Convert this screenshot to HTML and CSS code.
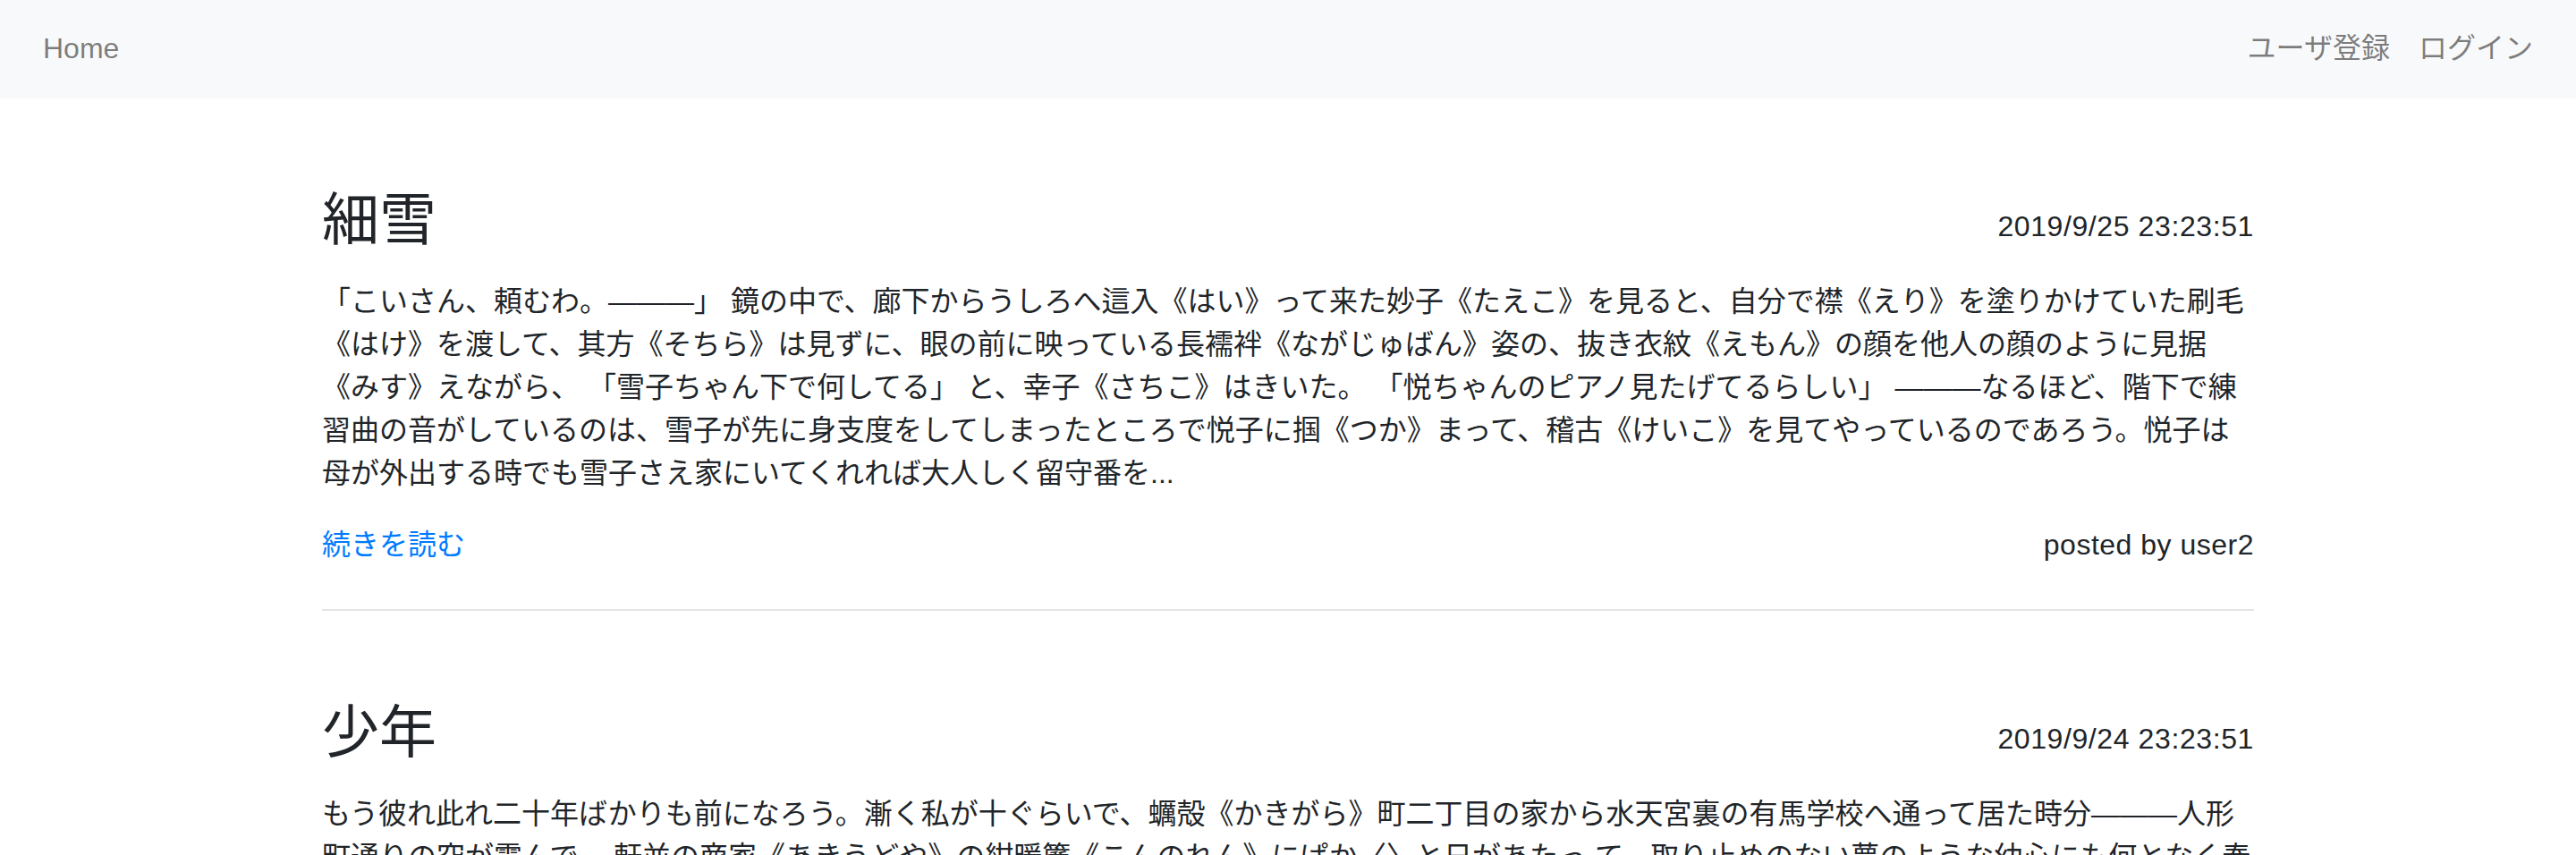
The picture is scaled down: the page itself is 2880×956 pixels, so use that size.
FILE: index.html
```html
<!DOCTYPE html>
<html lang="ja">
<head>
<meta charset="utf-8">
<title>Posts</title>
<link rel="stylesheet" href="styles.css">
</head>
<body>
<nav class="navbar">
  <ul class="nav-list">
    <li><a class="nav-link" href="#">Home</a></li>
  </ul>
  <ul class="nav-list">
    <li><a class="nav-link" href="#">ユーザ登録</a></li>
    <li><a class="nav-link" href="#">ログイン</a></li>
  </ul>
</nav>
<main class="container">
  <article class="post">
    <div class="post-head">
      <h2 class="post-title">細雪</h2>
      <span class="post-date">2019/9/25 23:23:51</span>
    </div>
    <p class="post-body">「こいさん、頼むわ。———」 鏡の中で、廊下からうしろへ這入《はい》って来た妙子《たえこ》を見ると、自分で襟《えり》を塗りかけていた刷毛《はけ》を渡して、其方《そちら》は見ずに、眼の前に映っている長襦袢《ながじゅばん》姿の、抜き衣紋《えもん》の顔を他人の顔のように見据《みす》えながら、 「雪子ちゃん下で何してる」 と、幸子《さちこ》はきいた。 「悦ちゃんのピアノ見たげてるらしい」 ———なるほど、階下で練習曲の音がしているのは、雪子が先に身支度をしてしまったところで悦子に掴《つか》まって、稽古《けいこ》を見てやっているのであろう。悦子は母が外出する時でも雪子さえ家にいてくれれば大人しく留守番を...</p>
    <div class="post-foot">
      <a class="read-more" href="#">続きを読む</a>
      <span class="post-author">posted by user2</span>
    </div>
  </article>
  <hr class="divider">
  <article class="post">
    <div class="post-head">
      <h2 class="post-title">少年</h2>
      <span class="post-date">2019/9/24 23:23:51</span>
    </div>
    <p class="post-body">もう彼れ此れ二十年ばかりも前になろう。漸く私が十ぐらいで、蠣殻《かきがら》町二丁目の家から水天宮裏の有馬学校へ通って居た時分———人形町通りの空が霞んで、 軒並の商家《あきうどや》の紺暖簾《こんのれん》にぱか〈〉と日があたっ て、取り止めのない夢のような幼心にも何となく春が感じられる陽気な時候の頃であった。...</p>
    <div class="post-foot">
      <a class="read-more" href="#">続きを読む</a>
      <span class="post-author">posted by user1</span>
    </div>
  </article>
</main>
</body>
</html>
```
FILE: styles.css
```css
* {
  box-sizing: border-box;
}

html, body {
  margin: 0;
  padding: 0;
}

body {
  font-family: "Liberation Sans", "Noto Sans CJK JP", sans-serif;
  font-size: 32px;
  line-height: 48px;
  color: #212529;
  background: #ffffff;
}

a {
  text-decoration: none;
}

.navbar {
  display: flex;
  justify-content: space-between;
  align-items: center;
  height: 110px;
  padding: 0 32px;
  background: #f8f9fa;
}

.nav-list {
  display: flex;
  list-style: none;
  margin: 0;
  padding: 0;
}

.nav-link {
  display: block;
  padding: 14px 16px 16px;
  color: rgba(0, 0, 0, 0.5);
}

.container {
  width: 2160px;
  margin: 0 auto;
}

.post {
  padding-top: 98px;
}

.post-head {
  display: flex;
  justify-content: space-between;
  align-items: flex-start;
  margin-bottom: 28px;
}

.post-title {
  margin: 0;
  font-size: 64px;
  line-height: 77px;
  font-weight: 400;
}

.post-date {
  margin-top: 21px;
  line-height: 48px;
  letter-spacing: 0.6px;
}

.post-author {
  letter-spacing: 0.5px;
}

.post-body {
  margin: 0 0 32px;
}

.post-foot {
  display: flex;
  justify-content: space-between;
  align-items: baseline;
}

.read-more {
  color: #007bff;
}

.divider {
  margin: 48px 0 0;
  border: 0;
  border-top: 2px solid rgba(0, 0, 0, 0.1);
}
```
